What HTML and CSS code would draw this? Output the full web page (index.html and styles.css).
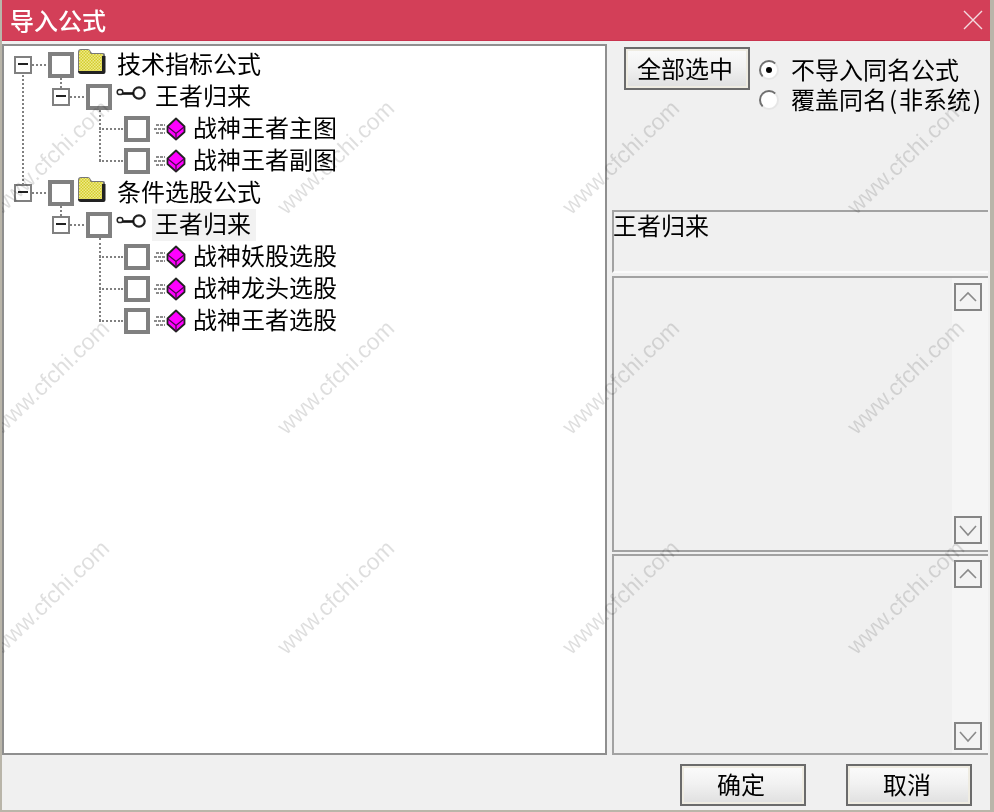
FILE: index.html
```html
<!DOCTYPE html>
<html lang="zh-CN">
<head>
<meta charset="utf-8">
<title>导入公式</title>
<link rel="stylesheet" href="styles.css">
</head>
<body>
<svg class="defs" width="0" height="0" aria-hidden="true">
  <defs>
    <pattern id="dither" width="3" height="3" patternUnits="userSpaceOnUse">
      <rect width="3" height="3" fill="#efe98c"/>
      <rect width="1.5" height="1.5" fill="#d4ce2c"/>
      <rect x="1.5" y="1.5" width="1.5" height="1.5" fill="#d4ce2c"/>
    </pattern>
    <symbol id="folder" viewBox="0 0 30 26">
      <path d="M2 24V4q0-3 3-3h7q2 0 3 3l1 1h11q2 0 2 2v17z" fill="#777"/>
      <path d="M3 23V5q0-3 2-3h7q2 0 2 3l1 1h11q1 0 1 1v16z" fill="url(#dither)"/>
      <path d="M3 23h23V8h3.500v16q0 2-2 2H5q-3 0-3-3z" fill="#222"/>
    </symbol>
    <symbol id="key" viewBox="0 0 30 14">
      <circle cx="23" cy="7" r="5.700" fill="#fff" stroke="#222" stroke-width="2.200"/>
      <path d="M4 7.500h14" stroke="#111" stroke-width="2.600"/>
      <ellipse cx="4" cy="6" rx="2.800" ry="2.600" fill="#fff" stroke="#222" stroke-width="1.500"/>
    </symbol>
    <symbol id="cube" viewBox="0 0 34 24">
      <path d="M2 8h9M0 12h11M2 16h9" stroke="#8c8c8c" stroke-width="2" stroke-dasharray="3 1"/>
      <path d="M22 1.500l8.500 8v5.500L22 22.500 13.500 15V9.500z" fill="#f0f" stroke="#222" stroke-width="1.800" stroke-linejoin="round"/>
      <path d="M14 10l8 6.500 8-6.500M22 16.500V22" fill="none" stroke="#4a0a4a" stroke-width="1.300"/>
    </symbol>
  </defs>
</svg>
<div class="window">
  <header class="titlebar">
    <h1 class="title">导入公式</h1>
    <svg class="close" viewBox="0 0 20 20" aria-label="关闭"><path d="M1 1l18 18M19 1L1 19"/></svg>
  </header>
  <main class="main">
    <ul class="tree">
      <li class="row l0 trunk"><span class="exp"></span><span class="chk"></span><svg class="ico folder"><use href="#folder"/></svg><span class="label">技术指标公式</span></li>
      <li class="row l1 kids-2"><span class="exp"></span><span class="chk"></span><svg class="ico key"><use href="#key"/></svg><span class="label">王者归来</span></li>
      <li class="row l2"><span class="chk"></span><svg class="ico cube"><use href="#cube"/></svg><span class="label">战神王者主图</span></li>
      <li class="row l2"><span class="chk"></span><svg class="ico cube"><use href="#cube"/></svg><span class="label">战神王者副图</span></li>
      <li class="row l0"><span class="exp"></span><span class="chk"></span><svg class="ico folder"><use href="#folder"/></svg><span class="label">条件选股公式</span></li>
      <li class="row l1 kids-3"><span class="exp"></span><span class="chk"></span><svg class="ico key"><use href="#key"/></svg><span class="label selected">王者归来</span></li>
      <li class="row l2"><span class="chk"></span><svg class="ico cube"><use href="#cube"/></svg><span class="label">战神妖股选股</span></li>
      <li class="row l2"><span class="chk"></span><svg class="ico cube"><use href="#cube"/></svg><span class="label">战神龙头选股</span></li>
      <li class="row l2"><span class="chk"></span><svg class="ico cube"><use href="#cube"/></svg><span class="label">战神王者选股</span></li>
    </ul>
    <section class="side">
      <div class="options">
        <button class="btn btn-all" type="button">全部选中</button>
        <div class="radios">
          <div class="radio-row"><span class="radio on"></span><span class="radio-text">不导入同名公式</span></div>
          <div class="radio-row"><span class="radio"></span><span class="radio-text">覆盖同名<span class="paren">(</span>非系统<span class="paren">)</span></span></div>
        </div>
      </div>
      <div class="panel name-panel"><span class="name-text">王者归来</span></div>
      <div class="panel desc-panel">
        <div class="scroll scroll-a">
          <span class="arrow"><svg viewBox="0 0 24 24"><path d="M4 16l8-8 8 8"/></svg></span>
          <span class="arrow"><svg viewBox="0 0 24 24"><path d="M4 8l8 9 8-9"/></svg></span>
        </div>
      </div>
      <div class="panel code-panel">
        <div class="scroll scroll-b">
          <span class="arrow"><svg viewBox="0 0 24 24"><path d="M4 16l8-8 8 8"/></svg></span>
          <span class="arrow"><svg viewBox="0 0 24 24"><path d="M4 8l8 9 8-9"/></svg></span>
        </div>
      </div>
    </section>
  </main>
  <footer class="footer">
    <button class="btn btn-foot" type="button">确定</button>
    <button class="btn btn-foot" type="button">取消</button>
  </footer>
  <div class="watermarks" aria-hidden="true">
    <span>www.cfchi.com</span><span>www.cfchi.com</span><span>www.cfchi.com</span><span>www.cfchi.com</span>
    <span>www.cfchi.com</span><span>www.cfchi.com</span><span>www.cfchi.com</span><span>www.cfchi.com</span>
    <span>www.cfchi.com</span><span>www.cfchi.com</span><span>www.cfchi.com</span><span>www.cfchi.com</span>
  </div>
</div>
</body>
</html>
```

FILE: styles.css
```css
* { box-sizing: border-box; }
html, body { margin: 0; padding: 0; }
body {
  width: 994px;
  height: 812px;
  overflow: hidden;
  font-family: "Noto Sans CJK SC", "Liberation Sans", sans-serif;
  font-size: 24px;
  line-height: 32px;
  color: #000;
  background: #f0f0f0;
}
.defs { position: absolute; }

.window {
  position: relative;
  width: 994px;
  height: 812px;
  display: flex;
  flex-direction: column;
  overflow: hidden;
  border-left: 2px solid #b9b5a9;
  border-right: 4px solid #b9b5a9;
  border-bottom: 2px solid #b9b5a9;
  background: #f0f0f0;
  filter: blur(0.5px);
}

.titlebar {
  height: 41px;
  flex: none;
  display: flex;
  align-items: center;
  justify-content: space-between;
  padding: 0 7px 0 10px;
  background: #d33f58;
  border-bottom: 1px solid #c9344f;
  margin: 0 -4px 0 -2px;
}
.title {
  margin: 0;
  font-size: 24px;
  font-weight: 500;
  line-height: 32px;
  color: #fff;
}
.close { width: 20px; height: 20px; margin-right: 4px; }
.close path { fill: none; stroke: #f3dbe0; stroke-width: 1.4; }

.main {
  height: 714px;
  flex: none;
  display: flex;
  gap: 5px;
  padding: 3px 2px 0 0;
}

.tree {
  width: 605px;
  flex: none;
  margin: 0;
  padding: 3px 0 0;
  list-style: none;
  background: #fff;
  border: 2px solid #8f8f8f;
}
.row {
  position: relative;
  height: 32px;
  display: flex;
  align-items: center;
}
.l0 { padding-left: 10px; }
.l1 { padding-left: 48px; }
.l2 { padding-left: 120px; }

.exp {
  position: relative;
  width: 18px;
  height: 18px;
  flex: none;
  margin-right: 16px;
  background: #fff;
  border: 2px solid #808080;
}
.exp::before {
  content: "";
  position: absolute;
  left: 2px;
  top: 5px;
  width: 10px;
  height: 2px;
  background: #222;
}
.exp::after {
  content: "";
  position: absolute;
  left: 16px;
  top: 6px;
  width: 14px;
  border-top: 2px dotted #808080;
}
.chk {
  width: 26px;
  height: 26px;
  flex: none;
  background: #fff;
  border: 4px solid #808080;
}
.ico { flex: none; }
.folder { width: 30px; height: 26px; margin: 0 11px 9px 2px; }
.key { width: 30px; height: 14px; margin: 0 9px 8px 4px; }
.cube { width: 34px; height: 24px; margin: 0 5px 0 4px; }
.label {
  white-space: nowrap;
  line-height: 28px;
  padding-bottom: 4px;
}
.selected { margin-left: -3px; padding-left: 3px; padding-right: 5px; background: #f2f2f2; }

.trunk::before {
  content: "";
  position: absolute;
  left: 18px;
  top: 26px;
  height: 110px;
  border-left: 2px dotted #808080;
}
.l1::before {
  content: "";
  position: absolute;
  left: 56px;
  top: -3px;
  height: 10px;
  border-left: 2px dotted #808080;
}
.l1::after {
  content: "";
  position: absolute;
  left: 95px;
  top: 29px;
  border-left: 2px dotted #808080;
}
.kids-2::after { height: 51px; }
.kids-3::after { height: 83px; }
.l2::before {
  content: "";
  position: absolute;
  left: 95px;
  top: 15px;
  width: 24px;
  border-top: 2px dotted #808080;
}

.side {
  width: 376px;
  flex: none;
  display: flex;
  flex-direction: column;
}
.options {
  height: 166px;
  flex: none;
  display: flex;
  padding: 3px 0 0 12px;
}
.btn {
  font: inherit;
  color: #000;
  padding: 0 4px 2px 0;
  border: 2px solid #6b6b6b;
  background: linear-gradient(#fbfbfb, #f2f2f2 45%, #dfdfdf);
  box-shadow: inset 0 0 0 2px #efece2;
  width: 126px;
  height: 42px;
  line-height: 36px;
}
.btn-all { height: 43px; }
.radios { margin: 8px 0 0 9px; }
.radio-row {
  height: 30px;
  display: flex;
  align-items: center;
  gap: 12px;
  white-space: nowrap;
}
.radio-text { line-height: 26px; padding-bottom: 3px; }
.paren { display: inline-block; width: 12px; text-align: center; }
.radio {
  width: 20px;
  height: 20px;
  flex: none;
  display: grid;
  place-items: center;
  border-radius: 50%;
  background: #fff;
  border: 2px solid;
  border-color: #6f6f6f #e6e6e6 #e6e6e6 #6f6f6f;
}
.radio.on::after {
  content: "";
  width: 6px;
  height: 6px;
  border-radius: 50%;
  background: #000;
}

.panel {
  display: flex;
  justify-content: flex-end;
  border-top: 2px solid #a2a2a2;
  border-left: 2px solid #a2a2a2;
  background: #f0f0f0;
}
.name-panel {
  height: 63px;
  flex: none;
  justify-content: flex-start;
  margin-bottom: 3px;
  border-bottom: 2px solid #fafafa;
}
.name-text { line-height: 26px; height: 26px; margin-left: -1px; }
.desc-panel {
  height: 276px;
  flex: none;
  margin-bottom: 2px;
  border-bottom: 2px solid #a2a2a2;
}
.code-panel {
  height: 201px;
  flex: none;
  border-bottom: 2px solid #a2a2a2;
}
.scroll {
  width: 36px;
  display: flex;
  flex-direction: column;
  justify-content: space-between;
  padding-left: 2px;
  background: #f5f5f5;
}
.scroll-a { padding-top: 5px; padding-bottom: 6px; }
.scroll-b { padding-top: 4px; padding-bottom: 3px; }
.arrow {
  width: 28px;
  height: 28px;
  display: block;
  background: #f3f3f3;
  border: 2px solid #858585;
}
.arrow svg { display: block; width: 24px; height: 24px; }
.arrow path { fill: none; stroke: #8a8a8a; stroke-width: 1.6; }

.footer {
  flex: 1;
  display: flex;
  justify-content: flex-end;
  gap: 40px;
  padding: 9px 18px 0 0;
}

.watermarks {
  position: absolute;
  left: -94px;
  top: 47px;
  display: grid;
  grid-template-columns: repeat(4, 285px);
  grid-template-rows: repeat(3, 220px);
  pointer-events: none;
}
.watermarks span {
  display: flex;
  align-items: center;
  justify-content: center;
  transform: rotate(-44deg);
  font-family: "Liberation Sans", sans-serif;
  font-size: 23px;
  white-space: nowrap;
  color: rgba(0, 0, 0, 0.13);
}
```
